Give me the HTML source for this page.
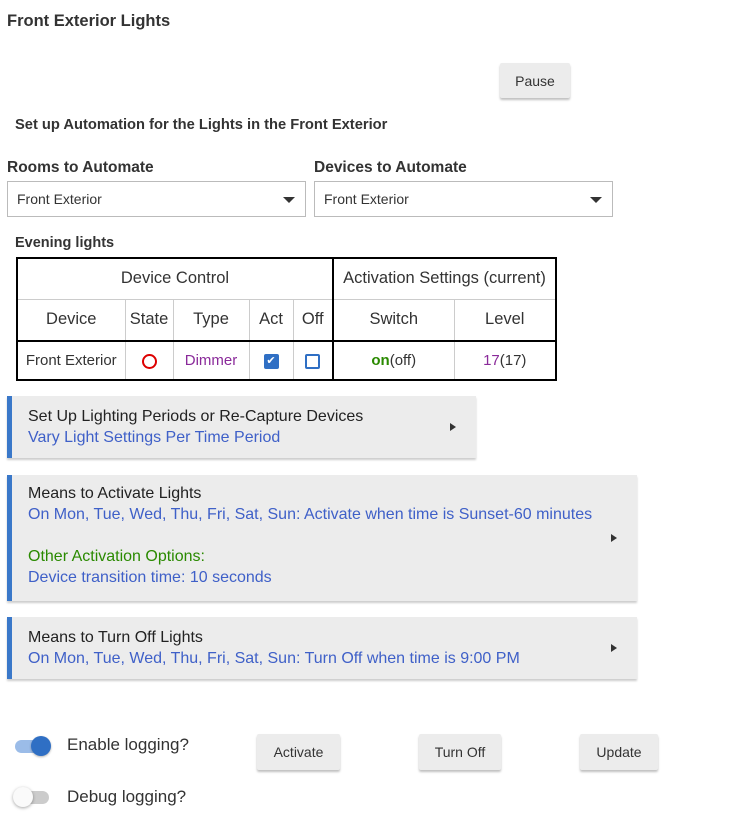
<!DOCTYPE html><html><head><style>
*{box-sizing:border-box}body{margin:0;width:748px;height:835px;background:#fff;font-family:"Liberation Sans",sans-serif;color:#222;position:relative;overflow:hidden}
.a{position:absolute}
.btn{position:absolute;background:#ececec;box-shadow:0 2px 2px rgba(0,0,0,.25);font-size:14px;color:#333;display:flex;align-items:center;justify-content:center;border-radius:2px}
.sel{position:absolute;border:1px solid #bbb;height:36px;font-size:14px;padding:9px 9px;color:#333}
.sel:after{content:"";position:absolute;right:10px;top:15px;border-left:6px solid transparent;border-right:6px solid transparent;border-top:6px solid #333}
.card{position:absolute;background:#ececec;border-left:5px solid #3a78c9;box-shadow:0 2px 2px rgba(0,0,0,.2);font-size:16px;padding:10px 0 0 16px;line-height:21px}
.card .b{color:#3f60c8}
.card:after{content:"";position:absolute;right:20px;top:50%;margin-top:-4px;border-top:4px solid transparent;border-bottom:4px solid transparent;border-left:6px solid #333}
table{position:absolute;left:16px;top:257px;border-collapse:collapse;border:2px solid #000;font-size:16.5px;color:#333}
td{border:1px solid #ccc;text-align:center;padding:0;white-space:nowrap}
.tk{border-right:2px solid #000}
</style></head><body>
<div class="a" style="left:7px;top:12px;font-size:16.5px;font-weight:bold;color:#333">Front Exterior Lights</div>
<div class="btn" style="left:500px;top:63px;width:70px;height:35px">Pause</div>
<div class="a" style="left:15px;top:117px;font-size:14.7px;font-weight:bold;color:#333">Set up Automation for the Lights in the Front Exterior</div>
<div class="a" style="left:7px;top:159px;font-size:15.5px;font-weight:bold;color:#333">Rooms to Automate</div>
<div class="a" style="left:314px;top:159px;font-size:15.5px;font-weight:bold;color:#333">Devices to Automate</div>
<div class="sel" style="left:7px;top:181px;width:299px">Front Exterior</div>
<div class="sel" style="left:314px;top:181px;width:299px">Front Exterior</div>
<div class="a" style="left:15px;top:235px;font-size:14.5px;font-weight:bold;color:#333">Evening lights</div>
<table>
<tr style="height:41px"><td colspan="5" class="tk" style="border-bottom:1px solid #ccc">Device Control</td><td colspan="2" style="border-bottom:1px solid #ccc">Activation Settings (current)</td></tr>
<tr style="height:42px;border-bottom:2px solid #000"><td style="width:108px">Device</td><td style="width:48px">State</td><td style="width:76px">Type</td><td style="width:44px">Act</td><td style="width:40px" class="tk">Off</td><td style="width:121px">Switch</td><td style="width:102px">Level</td></tr>
<tr style="height:39px;font-size:15px"><td>Front Exterior</td><td><span style="display:inline-block;width:15px;height:15px;border:2px solid #d00;border-radius:50%;vertical-align:middle"></span></td><td style="color:#8a2a9a">Dimmer</td><td><span style="display:inline-block;width:15px;height:15px;background:#2f6fc4;border-radius:2px;color:#fff;font-size:11px;line-height:15px;vertical-align:middle">✔</span></td><td class="tk"><span style="display:inline-block;width:15px;height:15px;border:2px solid #2f6fc4;border-radius:2px;vertical-align:middle"></span></td><td><b style="color:#2a8a00">on</b>(off)</td><td><span style="color:#8a2a9a">17</span>(17)</td></tr>
</table>
<div class="card" style="left:7px;top:396px;width:469px;height:62px">Set Up Lighting Periods or Re-Capture Devices<br><span class="b">Vary Light Settings Per Time Period</span></div>
<div class="card" style="left:7px;top:475px;width:630px;height:126px;padding-top:8px">Means to Activate Lights<br><span class="b">On Mon, Tue, Wed, Thu, Fri, Sat, Sun: Activate when time is Sunset-60 minutes</span><br><br><span style="color:#2a8a00">Other Activation Options:</span><br><span class="b">Device transition time: 10 seconds</span></div>
<div class="card" style="left:7px;top:617px;width:630px;height:62px">Means to Turn Off Lights<br><span class="b">On Mon, Tue, Wed, Thu, Fri, Sat, Sun: Turn Off when time is 9:00 PM</span></div>
<div class="a" style="left:15px;top:740px;width:34px;height:13px;border-radius:7px;background:#9bbce8"></div>
<div class="a" style="left:31px;top:736px;width:20px;height:20px;border-radius:50%;background:#2f6fc4;box-shadow:0 1px 2px rgba(0,0,0,.3)"></div>
<div class="a" style="left:67px;top:735px;font-size:17px;color:#333">Enable logging?</div>
<div class="a" style="left:15px;top:791px;width:34px;height:13px;border-radius:7px;background:#ccc"></div>
<div class="a" style="left:13px;top:787px;width:20px;height:20px;border-radius:50%;background:#fafafa;box-shadow:0 1px 3px rgba(0,0,0,.35)"></div>
<div class="a" style="left:67px;top:787px;font-size:17px;color:#333">Debug logging?</div>
<div class="btn" style="left:257px;top:734px;width:83px;height:36px">Activate</div>
<div class="btn" style="left:419px;top:734px;width:82px;height:36px">Turn Off</div>
<div class="btn" style="left:580px;top:734px;width:78px;height:36px">Update</div>
</body></html>
